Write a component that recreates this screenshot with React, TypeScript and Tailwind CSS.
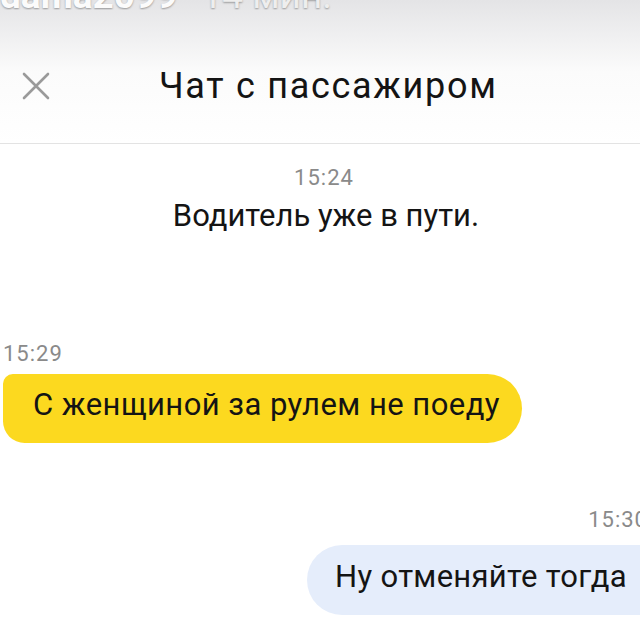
import React from 'react'

const XIcon: React.FC = () => (
  <svg width="28" height="28" viewBox="0 0 28 28" fill="none">
    <path d="M2 2 L26 26 M26 2 L2 26" stroke="#9a9a9a" strokeWidth="2.6" strokeLinecap="round" />
  </svg>
)

export default function App() {
  return (
    <div className="w-[640px] h-[633px] overflow-hidden bg-white font-['Roboto',sans-serif] text-[#141414]">
      {/* Header */}
      <div className="h-[144px] bg-gradient-to-b from-[#e4e4e6] via-[#fbfbfb] to-white border-b border-[#e3e3e3]">
        {/* cut-off status line */}
        <div className="h-[10px] overflow-hidden">
          <div className="-mt-[22px] flex gap-[24px] text-[37px] font-bold leading-[36px] text-[#fbfbfb] [text-shadow:0_1px_2px_rgba(0,0,0,0.35)]">
            <span>dama2099</span>
            <span className="font-normal text-[#eeeeee]">14 мин.</span>
          </div>
        </div>
        <div className="flex items-center mt-[56px]">
          <div className="w-[159px] pl-[22px] flex">
            <XIcon />
          </div>
          <span className="text-[36px] leading-[40px] tracking-[1.7px]">Чат с пассажиром</span>
        </div>
      </div>

      {/* Messages */}
      <div className="flex flex-col">
        <div className="mt-[22px] pl-[8px] text-center text-[22px] leading-[24px] tracking-[1px] text-[#8a8a8a]">15:24</div>
        <div className="mt-[8px] pl-[12px] text-center text-[31px] leading-[36px]">Водитель уже в пути.</div>

        <div className="mt-[108px] pl-[3px] text-[22px] leading-[24px] tracking-[1px] text-[#8a8a8a]">15:29</div>
        <div className="mt-[8px] flex">
          <div className="ml-[3px] h-[69px] flex items-center pb-[6px] pl-[30px] pr-[22px] bg-[#fcd91f] rounded-tl-[10px] rounded-bl-[22px] rounded-r-[35px] text-[31px] tracking-[0.45px]">
            С женщиной за рулем не поеду
          </div>
        </div>

        <div className="mt-[65px] flex justify-end -mr-[8px] text-[22px] leading-[24px] tracking-[1px] text-[#8a8a8a]">15:30</div>
        <div className="mt-[13px] flex justify-end">
          <div className="-mr-[30px] h-[70px] flex items-center pb-[6px] pl-[28px] pr-[43px] bg-[#e5edfb] rounded-l-[35px] text-[31px] tracking-[0.3px]">
            Ну отменяйте тогда
          </div>
        </div>
      </div>
    </div>
  )
}
